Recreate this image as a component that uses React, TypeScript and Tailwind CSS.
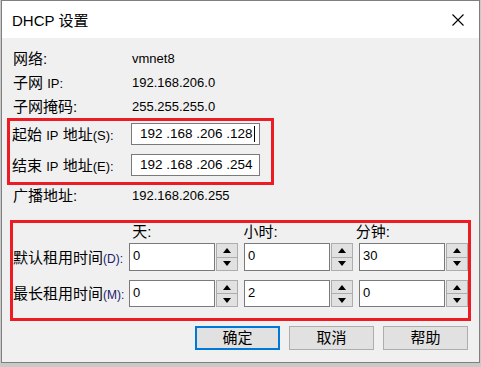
import React from "react";

const cjk = { fontFamily: '"Liberation Sans", "Noto Sans CJK SC", sans-serif' };

function Lat({ children }: { children: React.ReactNode }) {
    return <span className="text-[13px]">{children}</span>;
}

function SpinBox({ value }: { value: string }) {
    return (
        <div className="flex h-full">
            <div className="w-[86px] h-full bg-white border border-[#7a7a7a] pl-[3px] pt-[4px] text-[13px] leading-[16px] text-[#000]">
                {value}
            </div>
            <div className="w-[22px] h-full ml-[1px] border border-[#adadad] bg-[#e1e1e1] flex flex-col">
                <div className="flex-1 flex items-center justify-center border-b border-[#adadad]">
                    <svg width="8" height="5" viewBox="0 0 8 5"><path d="M0 5 L4 0 L8 5 Z" fill="#000" /></svg>
                </div>
                <div className="flex-1 flex items-center justify-center">
                    <svg width="8" height="5" viewBox="0 0 8 5"><path d="M0 0 L8 0 L4 5 Z" fill="#000" /></svg>
                </div>
            </div>
        </div>
    );
}

function InfoRow({ label, value, h }: { label: React.ReactNode; value: string; h: string }) {
    return (
        <div className={`flex items-center pl-[11px] ${h}`}>
            <div className="w-[119px] text-[15px] leading-none">{label}</div>
            <div className="text-[13px] leading-none">{value}</div>
        </div>
    );
}

export default function App() {
    const btn = "w-[85px] h-[24px] flex items-center justify-center bg-[#e1e1e1] text-[15px]";

    return (
        <div className="w-[481px] h-[367px] bg-[#c9c9c9] overflow-hidden" style={cjk}>
            <div className="ml-[1px] w-[479px] h-[363px] border border-[#7f7f7f] flex flex-col text-[#000]">
                {/* Title bar */}
                <div className="h-[37px] bg-white flex items-center justify-between pl-[10px] pr-[15px]">
                    <span className="text-[15px] leading-none pt-[1px]">DHCP 设置</span>
                    <svg width="12" height="12" viewBox="0 0 12 12">
                        <path d="M0.5 0.5 L11.5 11.5 M11.5 0.5 L0.5 11.5" stroke="#000" strokeWidth="1.1" />
                    </svg>
                </div>

                {/* Body */}
                <div className="flex-1 bg-[#f0f0f0] pt-[8px] flex flex-col">
                    <InfoRow h="h-[24px]" label="网络:" value="vmnet8" />
                    <InfoRow h="h-[24px]" label={<>子网 <Lat>IP:</Lat></>} value="192.168.206.0" />
                    <InfoRow h="h-[24px]" label="子网掩码:" value="255.255.255.0" />

                    {/* Address range */}
                    <div className="ml-[5px] w-[267px] h-[67px] border-[3px] border-[#ed1c24] pt-[2px] pl-[2px] flex flex-col gap-[9px]">
                        {[
                            { l: "起始", k: "(S):", v: "192 .168 .206 .128", cur: true },
                            { l: "结束", k: "(E):", v: "192 .168 .206 .254", cur: false },
                        ].map((r) => (
                            <div key={r.k} className="flex items-center h-[22px]">
                                <div className="w-[119px] text-[15px] leading-none whitespace-nowrap">
                                    {r.l} <Lat>IP</Lat> 地址<Lat>{r.k}</Lat>
                                </div>
                                <div className="w-[129px] h-full bg-white border border-[#7a7a7a] pl-[8px] flex items-center text-[13.5px] leading-none">
                                    {r.v}
                                    {r.cur && <span className="ml-[1px] w-[1px] h-[16px] bg-black" />}
                                </div>
                            </div>
                        ))}
                    </div>

                    <InfoRow h="h-[20px]" label="广播地址:" value="192.168.206.255" />

                    {/* Lease times */}
                    <div className="mt-[15px] ml-[8px] w-[461px] h-[101px] border-[3px] border-[#ed1c24] flex flex-col">
                        <div className="flex h-[16px] items-center text-[15px] leading-none">
                            <div className="w-[120px]" />
                            <div className="w-[114px] pl-[1px]">天:</div>
                            <div className="w-[114px]">小时:</div>
                            <div className="w-[114px]">分钟:</div>
                        </div>
                        {[
                            { l: "默认租用时间", k: "(D):", v: ["0", "0", "30"], h: "h-[28px] mt-[4px]" },
                            { l: "最长租用时间", k: "(M):", v: ["0", "2", "0"], h: "h-[27px] mt-[9px]" },
                        ].map((r) => (
                            <div key={r.k} className={`flex items-center ${r.h}`}>
                                <div className="w-[119px] text-[15px] leading-none whitespace-nowrap">
                                    {r.l}<span className="text-[12px] text-[#1a1a6a]">{r.k}</span>
                                </div>
                                <div className="flex h-full gap-[6px]">
                                    {r.v.map((v, i) => (
                                        <SpinBox key={i} value={v} />
                                    ))}
                                </div>
                            </div>
                        ))}
                    </div>

                    {/* Buttons */}
                    <div className="mt-[5px] flex justify-end gap-[9px] pr-[11px]">
                        <div className={`${btn} border-2 border-[#0078d7]`}>确定</div>
                        <div className={`${btn} border border-[#adadad]`}>取消</div>
                        <div className={`${btn} border border-[#adadad]`}>帮助</div>
                    </div>
                </div>
            </div>
        </div>
    );
}
